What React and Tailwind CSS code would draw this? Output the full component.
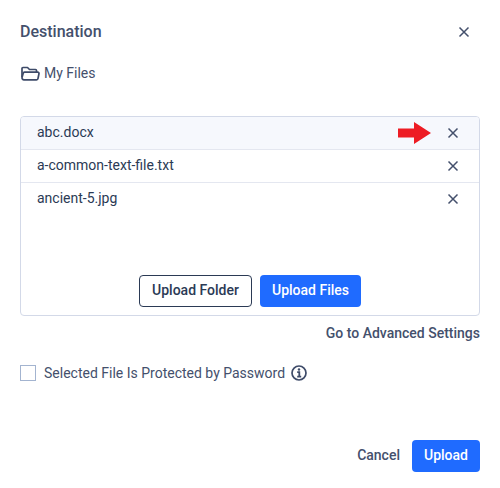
const X = ({ size = 12 }) => (
  <svg width={size} height={size} viewBox="0 0 12 12" fill="none" stroke="#44506c" strokeWidth="1.5">
    <path d="M1.5 1.5 10.5 10.5M10.5 1.5 1.5 10.5" />
  </svg>
);

const Row = ({ name, active, arrow, last }) => (
  <div className={`flex h-[33px] items-center pl-4 pr-[20px] text-sm text-[#2b3a55] ${active ? "bg-[#f6f8fd]" : ""} ${last ? "border-b border-transparent" : "border-b border-[#e4e7f0]"}`}>
    <span className="mb-[2px] flex-1">{name}</span>
    {arrow && (
      <svg className="mr-[15px]" width="34" height="22" viewBox="0 0 34 22">
        <path d="M0 6.500H16V0L33 11 16 22V15.500H0Z" fill="#ed1c24" />
      </svg>
    )}
    <X />
  </div>
);

export default function App() {
  return (
    <div className="flex h-[488px] w-[500px] flex-col bg-white px-5 pt-[22px] font-['Roboto',sans-serif] text-[#44506c]">
      <div className="flex h-[19px] items-center justify-between pr-[10px]">
        <h1 className="text-base font-medium">Destination</h1>
        <X />
      </div>
      <div className="mt-[22px] flex h-5 items-center gap-1 text-sm">
        <svg width="20" height="16" viewBox="0 0 20 16" fill="none" stroke="#3e4b69" strokeWidth="1.700" strokeLinejoin="round">
          <path d="M2 12V3.500a1 1 0 0 1 1-1h4.500l2 2h6a1 1 0 0 1 1 1V7" />
          <path d="M2 12.500a2 2 0 0 0 2 2.300h12.500a1.500 1.500 0 0 0 1.500-1.300L19 8.500a1.200 1.200 0 0 0-1.200-1.300H4.500a1.300 1.300 0 0 0-1.300 1L2 12.500" />
        </svg>
        <span>My Files</span>
      </div>
      <div className="mt-[33px] flex h-[200px] flex-col overflow-hidden rounded border border-[#d3d9e8]">
        <Row name="abc.docx" active arrow />
        <Row name="a-common-text-file.txt" />
        <Row name="ancient-5.jpg" last />
        <div className="mt-auto mb-2 flex justify-center gap-2">
          <button className="h-8 w-[113px] rounded border border-[#2b3a55] pb-[2px] text-sm font-medium text-[#2b3a55]">Upload Folder</button>
          <button className="h-8 w-[101px] rounded bg-[#1f6bff] pb-[2px] text-sm font-medium text-white">Upload Files</button>
        </div>
      </div>
      <div className="mt-[9px] text-right text-sm leading-4 font-medium">Go to Advanced Settings</div>
      <div className="mt-[22px] flex items-center text-sm">
        <span className="h-4 w-4 border border-[#a3b4d0]" />
        <span className="ml-2">Selected File Is Protected by Password</span>
        <svg className="ml-[6px]" width="16" height="16" viewBox="0 0 16 16" fill="none" stroke="#3e4b69">
          <circle cx="8" cy="8" r="7" strokeWidth="1.700" />
          <path d="M6.200 7.200H8.300V11.500M6.200 11.700H10.200" strokeWidth="1.800" />
          <circle cx="8" cy="4.500" r="1.200" fill="#3e4b69" stroke="none" />
        </svg>
      </div>
      <div className="mt-[57px] flex items-center justify-end gap-3">
        <span className="pb-[2px] text-sm font-medium">Cancel</span>
        <button className="h-8 w-[68px] rounded bg-[#1f6bff] pb-[2px] text-sm font-medium text-white">Upload</button>
      </div>
    </div>
  );
}
